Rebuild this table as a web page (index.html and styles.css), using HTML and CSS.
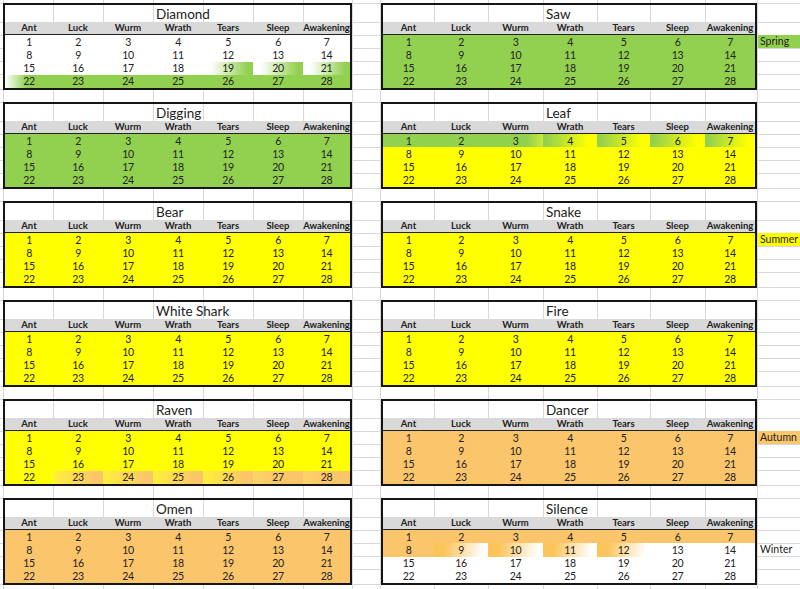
FILE: index.html
```html
<!DOCTYPE html>
<html lang="en">
<head>
<meta charset="utf-8">
<title>Seasons</title>
<link rel="stylesheet" href="styles.css">
</head>
<body>
<div class="sheet">

  <div class="band">
    <div class="tbl">
      <div class="title">Diamond</div>
      <div class="hd"><span>Ant</span><span>Luck</span><span>Wurm</span><span>Wrath</span><span>Tears</span><span>Sleep</span><span>Awakening</span></div>
      <div class="row"><span>1</span><span>2</span><span>3</span><span>4</span><span>5</span><span>6</span><span>7</span></div>
      <div class="row"><span>8</span><span>9</span><span>10</span><span>11</span><span>12</span><span>13</span><span>14</span></div>
      <div class="row"><span>15</span><span>16</span><span>17</span><span>18</span><span class="w-g">19</span><span class="w-g">20</span><span class="w-g">21</span></div>
      <div class="row green"><span class="w-g2">22</span><span>23</span><span>24</span><span>25</span><span>26</span><span>27</span><span>28</span></div>
    </div>
    <div class="tbl wide">
      <div class="title">Saw</div>
      <div class="hd"><span>Ant</span><span>Luck</span><span>Wurm</span><span>Wrath</span><span>Tears</span><span>Sleep</span><span>Awakening</span></div>
      <div class="row green"><span>1</span><span>2</span><span>3</span><span>4</span><span>5</span><span>6</span><span>7</span></div>
      <div class="row green"><span>8</span><span>9</span><span>10</span><span>11</span><span>12</span><span>13</span><span>14</span></div>
      <div class="row green"><span>15</span><span>16</span><span>17</span><span>18</span><span>19</span><span>20</span><span>21</span></div>
      <div class="row green"><span>22</span><span>23</span><span>24</span><span>25</span><span>26</span><span>27</span><span>28</span></div>
    </div>
    <div class="labels"><div class="lab spring">Spring</div></div>
  </div>

  <div class="band">
    <div class="tbl">
      <div class="title">Digging</div>
      <div class="hd"><span>Ant</span><span>Luck</span><span>Wurm</span><span>Wrath</span><span>Tears</span><span>Sleep</span><span>Awakening</span></div>
      <div class="row green"><span>1</span><span>2</span><span>3</span><span>4</span><span>5</span><span>6</span><span>7</span></div>
      <div class="row green"><span>8</span><span>9</span><span>10</span><span>11</span><span>12</span><span>13</span><span>14</span></div>
      <div class="row green"><span>15</span><span>16</span><span>17</span><span>18</span><span>19</span><span>20</span><span>21</span></div>
      <div class="row green"><span>22</span><span>23</span><span>24</span><span>25</span><span>26</span><span>27</span><span>28</span></div>
    </div>
    <div class="tbl wide">
      <div class="title">Leaf</div>
      <div class="hd"><span>Ant</span><span>Luck</span><span>Wurm</span><span>Wrath</span><span>Tears</span><span>Sleep</span><span>Awakening</span></div>
      <div class="row green"><span>1</span><span>2</span><span class="g-y1">3</span><span class="g-y">4</span><span class="g-y">5</span><span class="g-y">6</span><span class="g-y">7</span></div>
      <div class="row yellow"><span>8</span><span>9</span><span>10</span><span>11</span><span>12</span><span>13</span><span>14</span></div>
      <div class="row yellow"><span>15</span><span>16</span><span>17</span><span>18</span><span>19</span><span>20</span><span>21</span></div>
      <div class="row yellow"><span>22</span><span>23</span><span>24</span><span>25</span><span>26</span><span>27</span><span>28</span></div>
    </div>
  </div>

  <div class="band">
    <div class="tbl">
      <div class="title">Bear</div>
      <div class="hd"><span>Ant</span><span>Luck</span><span>Wurm</span><span>Wrath</span><span>Tears</span><span>Sleep</span><span>Awakening</span></div>
      <div class="row yellow"><span>1</span><span>2</span><span>3</span><span>4</span><span>5</span><span>6</span><span>7</span></div>
      <div class="row yellow"><span>8</span><span>9</span><span>10</span><span>11</span><span>12</span><span>13</span><span>14</span></div>
      <div class="row yellow"><span>15</span><span>16</span><span>17</span><span>18</span><span>19</span><span>20</span><span>21</span></div>
      <div class="row yellow"><span>22</span><span>23</span><span>24</span><span>25</span><span>26</span><span>27</span><span>28</span></div>
    </div>
    <div class="tbl wide">
      <div class="title">Snake</div>
      <div class="hd"><span>Ant</span><span>Luck</span><span>Wurm</span><span>Wrath</span><span>Tears</span><span>Sleep</span><span>Awakening</span></div>
      <div class="row yellow"><span>1</span><span>2</span><span>3</span><span>4</span><span>5</span><span>6</span><span>7</span></div>
      <div class="row yellow"><span>8</span><span>9</span><span>10</span><span>11</span><span>12</span><span>13</span><span>14</span></div>
      <div class="row yellow"><span>15</span><span>16</span><span>17</span><span>18</span><span>19</span><span>20</span><span>21</span></div>
      <div class="row yellow"><span>22</span><span>23</span><span>24</span><span>25</span><span>26</span><span>27</span><span>28</span></div>
    </div>
    <div class="labels"><div class="lab summer">Summer</div></div>
  </div>

  <div class="band">
    <div class="tbl">
      <div class="title">White Shark</div>
      <div class="hd"><span>Ant</span><span>Luck</span><span>Wurm</span><span>Wrath</span><span>Tears</span><span>Sleep</span><span>Awakening</span></div>
      <div class="row yellow"><span>1</span><span>2</span><span>3</span><span>4</span><span>5</span><span>6</span><span>7</span></div>
      <div class="row yellow"><span>8</span><span>9</span><span>10</span><span>11</span><span>12</span><span>13</span><span>14</span></div>
      <div class="row yellow"><span>15</span><span>16</span><span>17</span><span>18</span><span>19</span><span>20</span><span>21</span></div>
      <div class="row yellow"><span>22</span><span>23</span><span>24</span><span>25</span><span>26</span><span>27</span><span>28</span></div>
    </div>
    <div class="tbl wide">
      <div class="title">Fire</div>
      <div class="hd"><span>Ant</span><span>Luck</span><span>Wurm</span><span>Wrath</span><span>Tears</span><span>Sleep</span><span>Awakening</span></div>
      <div class="row yellow"><span>1</span><span>2</span><span>3</span><span>4</span><span>5</span><span>6</span><span>7</span></div>
      <div class="row yellow"><span>8</span><span>9</span><span>10</span><span>11</span><span>12</span><span>13</span><span>14</span></div>
      <div class="row yellow"><span>15</span><span>16</span><span>17</span><span>18</span><span>19</span><span>20</span><span>21</span></div>
      <div class="row yellow"><span>22</span><span>23</span><span>24</span><span>25</span><span>26</span><span>27</span><span>28</span></div>
    </div>
  </div>

  <div class="band">
    <div class="tbl">
      <div class="title">Raven</div>
      <div class="hd"><span>Ant</span><span>Luck</span><span>Wurm</span><span>Wrath</span><span>Tears</span><span>Sleep</span><span>Awakening</span></div>
      <div class="row yellow"><span>1</span><span>2</span><span>3</span><span>4</span><span>5</span><span>6</span><span>7</span></div>
      <div class="row yellow"><span>8</span><span>9</span><span>10</span><span>11</span><span>12</span><span>13</span><span>14</span></div>
      <div class="row yellow"><span>15</span><span>16</span><span>17</span><span>18</span><span>19</span><span>20</span><span>21</span></div>
      <div class="row yellow"><span>22</span><span class="y-o">23</span><span class="y-o">24</span><span class="y-o">25</span><span class="y-o">26</span><span class="y-o2">27</span><span class="y-o2">28</span></div>
    </div>
    <div class="tbl wide">
      <div class="title">Dancer</div>
      <div class="hd"><span>Ant</span><span>Luck</span><span>Wurm</span><span>Wrath</span><span>Tears</span><span>Sleep</span><span>Awakening</span></div>
      <div class="row orange"><span>1</span><span>2</span><span>3</span><span>4</span><span>5</span><span>6</span><span>7</span></div>
      <div class="row orange"><span>8</span><span>9</span><span>10</span><span>11</span><span>12</span><span>13</span><span>14</span></div>
      <div class="row orange"><span>15</span><span>16</span><span>17</span><span>18</span><span>19</span><span>20</span><span>21</span></div>
      <div class="row orange"><span>22</span><span>23</span><span>24</span><span>25</span><span>26</span><span>27</span><span>28</span></div>
    </div>
    <div class="labels"><div class="lab autumn">Autumn</div></div>
  </div>

  <div class="band">
    <div class="tbl">
      <div class="title">Omen</div>
      <div class="hd"><span>Ant</span><span>Luck</span><span>Wurm</span><span>Wrath</span><span>Tears</span><span>Sleep</span><span>Awakening</span></div>
      <div class="row orange"><span>1</span><span>2</span><span>3</span><span>4</span><span>5</span><span>6</span><span>7</span></div>
      <div class="row orange"><span>8</span><span>9</span><span>10</span><span>11</span><span>12</span><span>13</span><span>14</span></div>
      <div class="row orange"><span>15</span><span>16</span><span>17</span><span>18</span><span>19</span><span>20</span><span>21</span></div>
      <div class="row orange"><span>22</span><span>23</span><span>24</span><span>25</span><span>26</span><span>27</span><span>28</span></div>
    </div>
    <div class="tbl wide">
      <div class="title">Silence</div>
      <div class="hd"><span>Ant</span><span>Luck</span><span>Wurm</span><span>Wrath</span><span>Tears</span><span>Sleep</span><span>Awakening</span></div>
      <div class="row orange"><span>1</span><span>2</span><span>3</span><span>4</span><span>5</span><span>6</span><span>7</span></div>
      <div class="row"><span class="o">8</span><span class="o-w">9</span><span class="o-w">10</span><span class="o-w">11</span><span class="o-w">12</span><span>13</span><span>14</span></div>
      <div class="row"><span>15</span><span>16</span><span>17</span><span>18</span><span>19</span><span>20</span><span>21</span></div>
      <div class="row"><span>22</span><span>23</span><span>24</span><span>25</span><span>26</span><span>27</span><span>28</span></div>
    </div>
    <div class="labels"><div class="lab winter">Winter</div></div>
  </div>

</div>
</body>
</html>
```

FILE: styles.css
```css
html, body {
  margin: 0;
  padding: 0;
}

body {
  width: 800px;
  height: 589px;
  overflow: hidden;
  background: #ffffff;
  font-family: Lato, "Open Sans", sans-serif;
  color: #222222;
}

/* spreadsheet canvas with its light gridlines */
.sheet {
  box-sizing: border-box;
  height: 589px;
  padding: 3px 0 0 3px;
  display: flex;
  flex-direction: column;
  gap: 12px;
  background-image:
    linear-gradient(to right,
      transparent 3px, #d8d8d8 3px 4px,
      transparent 4px 53px, #d8d8d8 53px 54px,
      transparent 54px 103px, #d8d8d8 103px 104px,
      transparent 104px 153px, #d8d8d8 153px 154px,
      transparent 154px 203px, #d8d8d8 203px 204px,
      transparent 204px 253px, #d8d8d8 253px 254px,
      transparent 254px 303px, #d8d8d8 303px 304px,
      transparent 304px 352px, #d8d8d8 352px 353px,
      transparent 353px 380px, #d8d8d8 380px 381px,
      transparent 381px 434px, #d8d8d8 434px 435px,
      transparent 435px 488px, #d8d8d8 488px 489px,
      transparent 489px 543px, #d8d8d8 543px 544px,
      transparent 544px 597px, #d8d8d8 597px 598px,
      transparent 598px 650px, #d8d8d8 650px 651px,
      transparent 651px 705px, #d8d8d8 705px 706px,
      transparent 706px 757px, #d8d8d8 757px 758px,
      transparent 758px),
    linear-gradient(to bottom,
      #d8d8d8 0 1px,
      transparent 1px 19px, #d8d8d8 19px 20px,
      transparent 20px 32px, #d8d8d8 32px 33px,
      transparent 33px 45px, #d8d8d8 45px 46px,
      transparent 46px 58px, #d8d8d8 58px 59px,
      transparent 59px 71px, #d8d8d8 71px 72px,
      transparent 72px 86px, #d8d8d8 86px 87px,
      transparent 87px);
  background-size: 100% 100%, 100% 99px;
  background-position: 0 0, 0 3px;
  background-repeat: no-repeat, repeat;
}

.band {
  display: flex;
  flex: none;
  height: 87px;
}

.tbl {
  display: grid;
  flex: none;
  grid-template-columns: 48px repeat(5, 50px) 47px;
  grid-template-rows: 17px 13px repeat(4, 13.25px);
  border: 2px solid #151515;
}

.tbl.wide {
  grid-template-columns: 51px 54px 55px 54px 53px 55px 50px;
  margin-left: 29px;
}

.title {
  grid-column: 4 / span 4;
  padding-left: 3px;
  padding-top: 1px;
  font-size: 13.5px;
  line-height: 17px;
  white-space: nowrap;
}

.hd,
.row {
  display: contents;
}

.hd > span {
  background: #d9d9d9;
  border-bottom: 1px solid #222222;
  font-size: 9.5px;
  font-weight: 700;
  line-height: 12px;
  text-align: center;
  white-space: nowrap;
}

.row > span {
  background: #ffffff;
  padding-top: 1.5px;
  font-size: 10.5px;
  line-height: 11.75px;
  letter-spacing: -0.4px;
  text-align: center;
}

.row.green > span { background: #92d050; }
.row.yellow > span { background: #ffff00; }
.row.orange > span { background: #fbc56c; }

/* blended transition cells */
.row > span.w-g { background: linear-gradient(90deg, #ffffff 15%, #92d050 90%); }
.row > span.w-g2 { background: linear-gradient(90deg, #ffffff 0%, #92d050 45%); }
.row > span.g-y { background: linear-gradient(90deg, #92d050 5%, #ffff00 85%); }
.row > span.g-y1 { background: linear-gradient(90deg, #92d050 70%, #c9e83a 100%); }
.row > span.y-o { background: linear-gradient(90deg, #fff13a 0%, #fbc56c 85%); }
.row > span.y-o2 { background: linear-gradient(90deg, #fdd36a 0%, #fbc56c 50%); }
.row > span.o { background: #fbc56c; }
.row > span.o-w { background: linear-gradient(100deg, #fbc55a 20%, #ffffff 90%); }

/* season labels beside the right-hand tables */
.labels {
  flex: 1;
  display: grid;
  grid-template-rows: 19px 13px repeat(4, 13.25px);
}

.lab {
  grid-row: 3;
  margin-left: 1px;
  padding-left: 2px;
  font-size: 10.5px;
  line-height: 13.25px;
}

.lab.spring { background: #92d050; }
.lab.summer { background: #ffff00; }
.lab.autumn { background: #fbc56c; }
.lab.winter { grid-row: 4; }
```
